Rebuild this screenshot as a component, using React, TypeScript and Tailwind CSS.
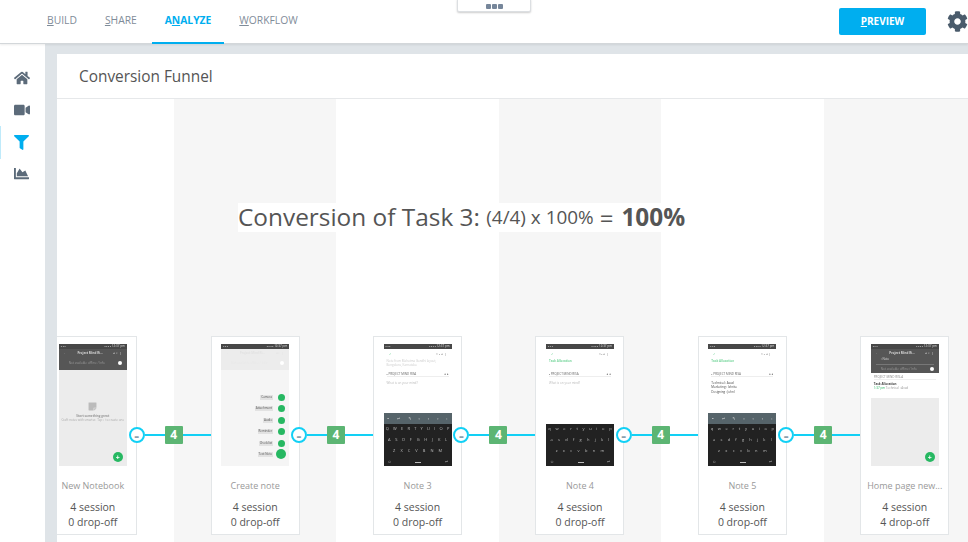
import { FaChartArea, FaCog, FaFilter, FaHome, FaStickyNote, FaVideo } from 'react-icons/fa';

interface Step {
  name: string;
  screen: 'empty' | 'menu' | 'note3' | 'note4' | 'note5' | 'home';
  dropOff: number;
}

const steps: Step[] = [
  { name: 'New Notebook', screen: 'empty', dropOff: 0 },
  { name: 'Create note', screen: 'menu', dropOff: 0 },
  { name: 'Note 3', screen: 'note3', dropOff: 0 },
  { name: 'Note 4', screen: 'note4', dropOff: 0 },
  { name: 'Note 5', screen: 'note5', dropOff: 0 },
  { name: 'Home page new...', screen: 'home', dropOff: 4 },
];

const tabs = [
  { first: 'B', rest: 'UILD' },
  { first: 'S', rest: 'HARE' },
  { first: 'A', second: 'N', rest: 'ALYZE', active: true },
  { first: 'W', rest: 'ORKFLOW' },
];

const menuItems = ['Camera', 'Attachment', 'Audio', 'Reminder', 'Checklist', 'Text Note'];

function StatusBar() {
  return (
    <div className="flex h-[5px] items-center justify-between bg-[#474747] px-[2px] text-[3px] leading-none text-[#ddd]">
      <span>▪ ▪ ▪</span>
      <span>▪ ▪ ▪ ▪ 12:37 pm</span>
    </div>
  );
}

function AppBar({ light }: { light?: boolean }) {
  return (
    <div className={`flex h-[21px] flex-col gap-[6px] px-[5px] pt-[3px] text-[3px] leading-none ${light ? 'bg-[#ececec] text-[#e2e2e2]' : 'bg-[#565656] text-[#d8d8d8]'}`}>
      <div className="flex justify-between">
        <span>←</span>
        <span className="font-bold">Project Mind Ri...</span>
        <span>◂ ⌕ ⋮</span>
      </div>
      <div className="flex items-center justify-between pl-[5px]">
        <span className={light ? 'text-[#e8e8e8]' : 'text-[#999]'}>Not available offline / Info</span>
        <span className="h-[4px] w-[4px] rounded-full bg-white" />
      </div>
    </div>
  );
}

function Fab() {
  return (
    <div className="absolute right-[4px] bottom-[4px] flex h-[10px] w-[10px] items-center justify-center rounded-full bg-[#27b862] text-[7px] leading-none font-bold text-white">
      +
    </div>
  );
}

function NoteHead({ title, faded }: { title?: boolean; faded?: boolean }) {
  return (
    <div className="flex flex-col bg-white px-[3px] text-[3px] leading-[4px]">
      <div className="flex h-[10px] items-center justify-between px-[2px] text-[#7bd79f]">
        <span className="font-bold">✓</span>
        <span className="text-[#888]">⋄ ▪ ◂ ⋮</span>
      </div>
      {title ? (
        <div className="h-[9px] font-bold text-[#7bd79f]">Task Allocation</div>
      ) : (
        <div className="h-[9px] text-[#ccc]">Note from Mahatma Gandhi layout, Bengaluru, Karnataka</div>
      )}
      <div className="mt-[3px] flex h-[6px] items-center justify-between border-b border-[#eee] text-[#666]">
        <span>▪ PROJECT MIND RISA</span>
        <span>● ●</span>
      </div>
      {faded && <div className="mt-[4px] text-[#bbb]">What is on your mind?</div>}
    </div>
  );
}

function Keyboard({ upper, toolbar }: { upper?: boolean; toolbar?: boolean }) {
  const rows = ['qwertyuiop', 'asdfghjkl', 'zxcvbnm'];
  return (
    <div className="flex flex-col bg-[#222] text-[4px] leading-none text-[#bbb]">
      {toolbar && (
        <div className="flex h-[11px] items-center justify-around bg-[#56646a] text-[#ddd]">
          <span>▪</span>
          <span>↵</span>
          <span>↰</span>
          <span>▫</span>
          <span>▫</span>
          <span>▫</span>
          <span>›</span>
        </div>
      )}
      <div className="flex h-[42px] flex-col justify-between pt-[3px] pb-[2px]">
        {rows.map((row, i) => (
          <div key={row} className={`flex justify-around ${i === 2 ? 'px-[7px]' : i === 1 ? 'px-[2px]' : ''}`}>
            {row.split('').map(k => (
              <span key={k}>{upper ? k.toUpperCase() : k}</span>
            ))}
          </div>
        ))}
        <div className="flex justify-between px-[4px]">
          <span>☺</span>
          <span className="mt-[2px] h-px w-[6px] bg-[#bbb]" />
          <span>↵</span>
        </div>
      </div>
    </div>
  );
}

function PhoneScreen({ screen }: { screen: Step['screen'] }) {
  if (screen === 'empty') {
    return (
      <div className="relative flex h-full flex-col bg-[#ececec]">
        <StatusBar />
        <AppBar />
        <div className="flex flex-col items-center pt-[32px] text-[3px] leading-[4px] text-[#aaa]">
          <FaStickyNote className="mb-[3px] text-[9px] text-[#bbb]" />
          <span className="font-bold text-[#999]">Start something great</span>
          <span>Craft notes with smarter. Tap + to create one</span>
        </div>
        <Fab />
      </div>
    );
  }
  if (screen === 'menu') {
    return (
      <div className="flex h-full flex-col bg-[#f5f5f5]">
        <StatusBar />
        <AppBar light />
        <div className="flex flex-1 flex-col items-end gap-[4.4px] pt-[24px] pr-[3px]">
          {menuItems.map((item, i) => (
            <div key={item} className="flex h-[7px] items-center gap-[3px]">
              <span className="bg-[#e2e2e2] px-[1px] text-[3px] leading-[5px] text-[#555]">{item}</span>
              <span className="flex w-[10px] items-center justify-center">
                <span className={`rounded-full bg-[#27b862] ${i === 5 ? 'h-[10px] w-[10px]' : 'h-[7px] w-[7px]'}`} />
              </span>
            </div>
          ))}
        </div>
      </div>
    );
  }
  if (screen === 'home') {
    return (
      <div className="relative flex h-full flex-col bg-white">
        <StatusBar />
        <div className="flex h-[24px] flex-col gap-[3px] bg-[#565656] px-[5px] pt-[3px] text-[3px] leading-none text-[#d8d8d8]">
          <div className="flex justify-between">
            <span>←</span>
            <span className="font-bold">Project Mind Ri...</span>
            <span>◂ ⌕ ⋮</span>
          </div>
          <span className="pl-[5px]">‹ Note</span>
          <div className="flex items-center justify-between border-t border-[#777] pt-[2px] pl-[5px]">
            <span className="text-[#999]">Not available offline / Info</span>
            <span className="h-[4px] w-[4px] rounded-full bg-white" />
          </div>
        </div>
        <div className="px-[3px] pt-[2px] text-[3px] leading-[4px]">
          <div className="h-[5px] border-b border-[#eee] text-[#888]">PROJECT MIND RISLA</div>
          <div className="mt-[2px] font-bold text-[#444]">Task Allocation</div>
          <div className="text-[#999]"><span className="text-[#27b862]">1:37 pm</span> Technical : Avad</div>
        </div>
        <div className="mt-[8px] flex-1 bg-[#ececec]" />
        <Fab />
      </div>
    );
  }
  return (
    <div className="flex h-full flex-col justify-between bg-white">
      <div>
        <StatusBar />
        <NoteHead title={screen !== 'note3'} faded={screen !== 'note5'} />
        {screen === 'note5' && (
          <div className="mt-[4px] px-[3px] text-[3px] leading-[4.4px] text-[#444]">
            <div>Technical : Avad</div>
            <div>Marketing : Ishrita</div>
            <div>Designing : Johnl</div>
          </div>
        )}
      </div>
      <Keyboard upper={screen === 'note3'} toolbar={screen !== 'note4'} />
    </div>
  );
}

function Connector() {
  return (
    <div className="absolute top-[328px] left-[117px] z-10 flex h-4 w-[82px] items-center">
      <div className="flex h-4 w-4 shrink-0 items-center justify-center rounded-full border-2 border-[#12d0f5] bg-white text-[15px] leading-none font-bold text-[#8aa0ad]">
        -
      </div>
      <div className="h-[2px] w-[20px] bg-[#12d0f5]" />
      <div className="flex h-[18px] w-[18px] shrink-0 items-center justify-center rounded-[1px] bg-[#5cb573] text-[12px] font-bold text-white">
        4
      </div>
      <div className="h-[2px] flex-1 bg-[#12d0f5]" />
    </div>
  );
}

function StepColumn({ step, index }: { step: Step; index: number }) {
  return (
    <div className={`relative flex w-[162.4px] shrink-0 flex-col items-center pt-[237px] ${index % 2 ? 'bg-[#f6f6f6]' : 'bg-white'}`}>
      <div className="flex h-[199px] w-[89px] flex-col items-center border border-[#e3e6e8] bg-white pt-[7px]">
        <div className="h-[122px] w-[68px] overflow-hidden blur-[0.4px]">
          <PhoneScreen screen={step.screen} />
        </div>
        <div className="mt-[13px] text-center text-[9px] leading-[14px] whitespace-nowrap text-[#999]">{step.name}</div>
        <div className="mt-[7px] text-center text-[10.5px] leading-[15px] text-[#555]">
          <div>4 session</div>
          <div>{step.dropOff} drop-off</div>
        </div>
      </div>
      {index < steps.length - 1 && <Connector />}
    </div>
  );
}

export default function App() {
  return (
    <div className="relative flex h-[542px] w-[968px] flex-col overflow-hidden bg-white font-['Open_Sans',sans-serif]">
      {/* Top bar */}
      <header className="z-10 flex h-[44px] shrink-0 items-center justify-between border-b border-[#d3d7da] bg-white pl-[34px] shadow-[0_1px_2px_rgba(0,0,0,0.08)]">
        <nav className="flex h-full gap-[2px]">
          {tabs.map(tab => (
            <div
              key={tab.first}
              className={`flex h-[44px] items-center border-b-2 px-[13px] text-[10.3px] ${tab.active ? 'border-[#00aeef] font-bold text-[#00aeef]' : 'border-transparent text-[#7f8c99]'}`}
            >
              {tab.second ? (
                <span>{tab.first}<u>{tab.second}</u>{tab.rest}</span>
              ) : (
                <span><u>{tab.first}</u>{tab.rest}</span>
              )}
            </div>
          ))}
        </nav>
        <div className="flex items-center gap-[21px]">
          <button className="h-[27px] w-[87px] rounded-[2px] bg-[#00aeef] text-[10px] font-bold text-white">
            <u>P</u>REVIEW
          </button>
          <FaCog className="text-[21px] text-[#4a5b6b]" />
        </div>
      </header>

      {/* Handle for the collapsed top drawer */}
      <div className="absolute top-[-1px] left-[457px] z-20 flex h-[13px] w-[74px] items-center justify-center gap-px rounded-b-[2px] border border-[#dcdfe2] bg-white pt-[2px] shadow-[0_1px_2px_rgba(0,0,0,0.2)]">
        <span className="h-[5px] w-[5px] rounded-[1px] bg-[#76869a]" />
        <span className="h-[5px] w-[5px] rounded-[1px] bg-[#76869a]" />
        <span className="h-[5px] w-[5px] rounded-[1px] bg-[#76869a]" />
      </div>

      <div className="flex min-h-0 flex-1">
        {/* Side nav */}
        <aside className="flex w-[45px] shrink-0 flex-col bg-white pt-[18px] text-[16px] text-[#5c6b7a]">
          <div className="flex h-[32px] items-center pl-[14px]"><FaHome /></div>
          <div className="flex h-[32px] items-center pl-[14px]"><FaVideo /></div>
          <div className="flex h-[33px] items-center border-l border-[#bfeafa] pl-[13px] text-[#00aeef]"><FaFilter className="text-[15px]" /></div>
          <div className="flex h-[28px] items-center pl-[14px]"><FaChartArea className="text-[15px]" /></div>
        </aside>

        <main className="flex min-w-0 flex-1 bg-[#dfe4e8] pt-[10px] pl-[12px]">
          <section className="flex min-w-0 flex-1 flex-col overflow-hidden bg-white">
            <div className="flex h-[45px] shrink-0 items-center border-b border-[#e6e8ea] pt-[2px] pl-[22px] text-[15.4px] text-[#555]">
              Conversion Funnel
            </div>
            <div className="relative flex min-h-0 flex-1 overflow-hidden">
              <div className="ml-[-45.4px] flex">
                {steps.map((step, i) => (
                  <StepColumn key={step.name} step={step} index={i} />
                ))}
              </div>
              <div className="absolute top-[104px] left-[181px] z-10 flex h-[29px] items-center whitespace-nowrap text-[#555]">
                <div className="absolute top-0 left-0 h-full w-[423px] bg-white" />
                <span className="relative text-[24.4px]">Conversion of Task 3:&nbsp;</span>
                <span className="relative text-[18.9px]">(4/4) x 100%</span>
                <span className="relative ml-[6px] text-[24px]">=</span>
                <span className="relative ml-[8px] text-[24.4px] font-bold">100%</span>
              </div>
            </div>
          </section>
        </main>
      </div>
    </div>
  );
}
